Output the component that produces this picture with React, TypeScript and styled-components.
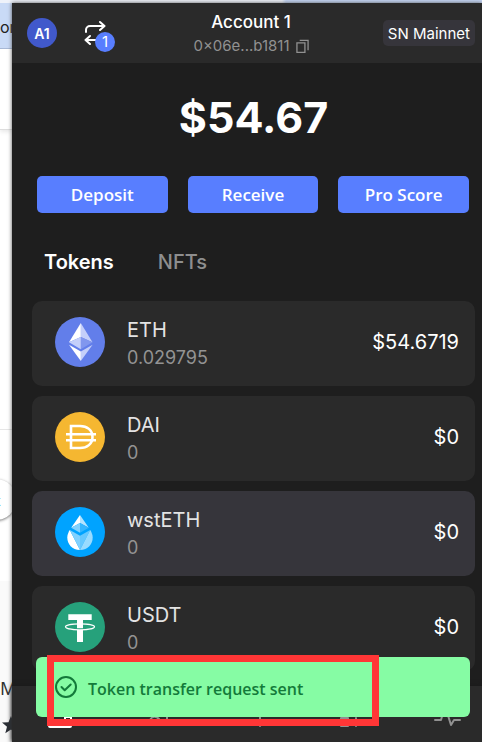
import React from "react";
import styled, { createGlobalStyle } from "styled-components";

const GlobalStyle = createGlobalStyle`
  *, *::before, *::after { box-sizing: border-box; }
  body { margin: 0; background: #fff; font-family: Inter, "Noto Sans", sans-serif; }
  button { font: inherit; border: 0; padding: 0; margin: 0; background: none; color: inherit; }
  p, h1, h2, ul { margin: 0; padding: 0; font-weight: inherit; }
`;

const Screen = styled.div`
  display: grid;
  grid-template-columns: 12px minmax(0, 1fr);
  grid-template-rows: 3px minmax(0, 1fr);
  min-height: 100vh;
`;

const BrowserTop = styled.div`
  grid-column: 1 / -1;
  background: linear-gradient(90deg, #eef2fa 0 282px, #c5d6f5 286px 100%);
`;

const PageBehind = styled.aside`
  display: flex;
  flex-direction: column;
  overflow: hidden;
  background: #fff;
  white-space: nowrap;
`;

const BehindTab = styled.div`
  height: 46px;
  padding-top: 12px;
  background: #c9daf6;
  border-bottom: 1px solid #9fb2d3;
  color: #222;
  font-size: 16px;
  line-height: 24px;
`;

const BehindToolbar = styled.div`
  height: 81px;
  border-bottom: 1px solid #ddd;
  box-shadow: 0 2px 4px #e8e8e8;
`;

const BehindSection = styled.div`
  height: 300px;
  border-bottom: 1px solid #e6e6e6;
`;

const BehindPill = styled.div`
  height: 41px;
  margin-top: 49px;
  width: 40px;
  margin-left: -24px;
  padding-left: 20px;
  border-radius: 0 20px 20px 0;
  box-shadow: 0 1px 3px #777;
  color: #4b9fd5;
  font-size: 14px;
  line-height: 44px;
`;

const BehindFooter = styled.div`
  display: flex;
  flex-direction: column;
  flex: 1;
  margin-top: 61px;
  padding-top: 95px;
  background: #fafafa;
  color: #333;
  font: 18px/24px "Noto Sans", sans-serif;
`;

const StarIcon = styled.svg`
  flex: none;
  margin: 15px 0 0 1px;
`;

const Wallet = styled.main`
  position: relative;
  display: flex;
  flex-direction: column;
  background: #1e1e1e;
  color: #fff;
  box-shadow: 0 0 4px #555;
`;

const Header = styled.header`
  display: grid;
  grid-template-columns: 1fr auto 1fr;
  align-items: center;
  height: 60px;
  padding: 0 7px 0 15px;
  background: #2a2a2a;
`;

const HeaderStart = styled.div`
  display: flex;
  align-items: center;
  gap: 26px;
`;

const Avatar = styled.button`
  width: 30px;
  height: 30px;
  border-radius: 50%;
  background: #4159cb;
  font-size: 14px;
  font-weight: 600;
`;

const Activity = styled.button`
  position: relative;
  width: 24px;
  height: 28px;
`;

const Count = styled.span`
  position: absolute;
  left: 12px;
  top: 13px;
  width: 20px;
  height: 20px;
  border-radius: 50%;
  background: #587eff;
  font-size: 15px;
  line-height: 20px;
`;

const Account = styled.div`
  display: flex;
  flex-direction: column;
  align-items: center;
  padding-top: 2px;
`;

const AccountName = styled.h1`
  font-size: 17px;
  font-weight: 500;
  line-height: 24px;
`;

const Address = styled.button`
  display: flex;
  align-items: center;
  gap: 6px;
  color: #919191;
  font-size: 15px;
  line-height: 24px;
`;

const Network = styled.button`
  justify-self: end;
  height: 26px;
  padding: 0 5px;
  border-radius: 5px;
  background: #36353b;
  font-size: 15px;
  white-space: nowrap;
`;

const Balance = styled.p`
  padding: 26px 7px 0 20px;
  font-size: 43px;
  font-weight: 700;
  line-height: 56px;
  text-align: center;
`;

const Actions = styled.div`
  display: grid;
  grid-template-columns: repeat(3, 1fr);
  gap: 20px;
  padding: 31px 13px 0 25px;
`;

const Action = styled.button`
  height: 37px;
  padding-top: 1px;
  border-radius: 5px;
  background: #587eff;
  font: 600 17px/24px "Open Sans", sans-serif;
`;

const Tabs = styled.div`
  display: flex;
  gap: 44px;
  padding: 35px 32px 0;
`;

const Tab = styled.button<{ $active?: boolean }>`
  color: ${(p) => (p.$active ? "#fff" : "#8e8e8e")};
  font-size: 20px;
  font-weight: ${(p) => (p.$active ? 600 : 500)};
  line-height: 28px;
`;

const TokenList = styled.ul`
  display: flex;
  flex-direction: column;
  gap: 10px;
  flex: 1;
  padding: 25px 7px 15px 20px;
  list-style: none;
`;

const TokenRow = styled.li<{ $hovered?: boolean }>`
  display: flex;
  align-items: center;
  gap: 22px;
  height: 85px;
  padding: 0 16px 3px 23px;
  border-radius: 10px;
  background: ${(p) => (p.$hovered ? "#36353b" : "#2a2a2a")};
`;

const TokenLogo = styled.svg`
  flex: none;
  width: 50px;
  height: 50px;
`;

const TokenText = styled.div`
  flex: 1;
  padding-top: 3px;
`;

const TokenName = styled.h2`
  color: #e3e3e3;
  font-size: 20px;
  line-height: 28px;
`;

const TokenAmount = styled.p`
  color: #939393;
  font-size: 18px;
  line-height: 28px;
`;

const TokenValue = styled.p`
  font-size: 20px;
  line-height: 28px;
`;

const Nav = styled.nav`
  display: flex;
  align-items: center;
  justify-content: space-between;
  height: 56px;
  padding: 0 20px 0 33px;
  background: #2a2a2a;
  box-shadow: 0 0 5px #191919;
`;

const NavButton = styled.button<{ $active?: boolean }>`
  display: flex;
  color: ${(p) => (p.$active ? "#fff" : "#919191")};
`;

const Toast = styled.div`
  position: absolute;
  left: 24px;
  right: 12px;
  bottom: 25px;
  display: flex;
  align-items: center;
  gap: 10px;
  height: 60px;
  padding: 0 18px;
  border-radius: 6px;
  background: #86fca4;
  color: #137a3a;
  font: 600 16px/24px "Open Sans", sans-serif;
`;

const ToastText = styled.span`
  padding-top: 3px;
`;

const Highlight = styled.div`
  position: absolute;
  left: 35px;
  right: 103px;
  bottom: 16px;
  height: 71px;
  border: 7px solid #ff3636;
  pointer-events: none;
`;

const EthLogo = () => (
  <TokenLogo viewBox="0 0 50 50" aria-hidden="true">
    <circle cx="25" cy="25" r="25" fill="#627eea" />
    <path d="M25.8 6v14l11.7 5.3z" fill="#c4cffa" />
    <path d="M25.8 6 14 25.3 25.8 20z" fill="#fff" />
    <path d="M25.8 34.6V44L37.6 27.8z" fill="#c4cffa" />
    <path d="M25.8 44v-9.4L14 27.8z" fill="#fff" />
    <path d="M25.8 32.3 37.5 25.3 25.8 20z" fill="#8197ee" />
    <path d="m14 25.3 11.8 7V20z" fill="#c4cffa" />
  </TokenLogo>
);

const DaiLogo = () => (
  <TokenLogo viewBox="0 0 50 50" aria-hidden="true">
    <circle cx="25" cy="25" r="25" fill="#f5b731" />
    <path d="M16 14h9c7 0 12.500 4 12.500 11S32 36 25 36h-9z" fill="none" stroke="#fff" strokeWidth="2.600" />
    <path d="M11 22.300h30M11 28.300h30" stroke="#fff" strokeWidth="2.400" />
  </TokenLogo>
);

const WstEthLogo = () => (
  <TokenLogo viewBox="0 0 50 50" aria-hidden="true">
    <circle cx="25" cy="25" r="25" fill="#00a3ff" />
    <path d="M25 8l-8.800 12.800L25 16z" fill="#fff" />
    <path d="M25 8l8.800 12.800L25 16z" fill="#b3e3ff" />
    <path d="M25 16l-8.800 4.800L25 25.800z" fill="#80d1ff" />
    <path d="M25 16l8.800 4.800-8.800 5z" fill="#33b5ff" />
    <path d="M14.800 23L25 43C17 43 12.300 37 12.300 30.500 12.300 27.500 13.600 25 14.800 23z" fill="#fff" />
    <path d="M14.800 23L25 28.800V43z" fill="#80d1ff" />
    <path d="M35.200 23L25 28.800V43z" fill="#66c8ff" />
    <path d="M35.200 23L25 43C33 43 37.700 37 37.700 30.500 37.700 27.500 36.400 25 35.200 23z" fill="#99dbff" />
  </TokenLogo>
);

const UsdtLogo = () => (
  <TokenLogo viewBox="0 0 50 50" aria-hidden="true">
    <circle cx="25" cy="25" r="25" fill="#26a17b" />
    <path d="M13.300 12.300h23.400V18h-8.700v8.200h-6V18h-8.700zM22 28h6v12h-6z" fill="#fff" />
    <ellipse cx="25" cy="24.800" rx="14.500" ry="3" fill="none" stroke="#fff" strokeWidth="1.200" />
  </TokenLogo>
);

const tokens = [
  { name: "ETH", amount: "0.029795", value: "$54.6719", Logo: EthLogo },
  { name: "DAI", amount: "0", value: "$0", Logo: DaiLogo },
  { name: "wstETH", amount: "0", value: "$0", Logo: WstEthLogo, hovered: true },
  { name: "USDT", amount: "0", value: "$0", Logo: UsdtLogo },
];

const icon = { fill: "none", stroke: "currentColor", strokeWidth: 2, strokeLinecap: "round", strokeLinejoin: "round" } as const;

export default function App() {
  return (
    <>
      <GlobalStyle />
      <Screen>
        <BrowserTop />
        <PageBehind>
          <BehindTab>or</BehindTab>
          <BehindToolbar />
          <BehindSection />
          <BehindPill>t</BehindPill>
          <BehindFooter>
            M
            <StarIcon width="20" height="20" viewBox="0 0 20 20" aria-hidden="true">
              <path d="m10 1 2.500 6.200 6.500.4-5 4.200 1.700 6.500L10 14.600l-5.700 3.700L6 11.800 1 7.600l6.500-.4z" fill="#2c3037" />
            </StarIcon>
          </BehindFooter>
        </PageBehind>
        <Wallet>
          <Header>
            <HeaderStart>
              <Avatar>A1</Avatar>
              <Activity aria-label="Pending activity">
                <svg width="24" height="26" viewBox="0 0 24 26" {...icon} aria-hidden="true">
                  <path d="M3 13v-2a4 4 0 0 1 4-4h14M17 3l4.500 4L17 11M2.500 21H15M7 17l-4.500 4L7 25" />
                </svg>
                <Count>1</Count>
              </Activity>
            </HeaderStart>
            <Account>
              <AccountName>Account 1</AccountName>
              <Address aria-label="Copy address">
                0×06e...b1811
                <svg width="13" height="15" viewBox="0 0 14 16" fill="none" stroke="currentColor" strokeWidth="1.400" aria-hidden="true">
                  <path d="M1 4h8.600v10.300H1zM4 1.400h9V12" />
                </svg>
              </Address>
            </Account>
            <Network>SN Mainnet</Network>
          </Header>
          <Balance>$54.67</Balance>
          <Actions>
            <Action>Deposit</Action>
            <Action>Receive</Action>
            <Action>Pro Score</Action>
          </Actions>
          <Tabs role="tablist">
            <Tab role="tab" aria-selected="true" $active>Tokens</Tab>
            <Tab role="tab" aria-selected="false">NFTs</Tab>
          </Tabs>
          <TokenList>
            {tokens.map(({ name, amount, value, Logo, hovered }) => (
              <TokenRow key={name} $hovered={hovered}>
                <Logo />
                <TokenText>
                  <TokenName>{name}</TokenName>
                  <TokenAmount>{amount}</TokenAmount>
                </TokenText>
                <TokenValue>{value}</TokenValue>
              </TokenRow>
            ))}
          </TokenList>
          <Nav aria-label="Wallet sections">
            <NavButton $active aria-label="Wallet">
              <svg width="28" height="30" viewBox="0 0 28 30" {...icon} aria-hidden="true">
                <path d="M4 8v19a1 1 0 0 0 1 1h20a1 1 0 0 0 1-1V8zM26 18h-6v5h6" />
              </svg>
            </NavButton>
            <NavButton aria-label="Swap">
              <svg width="28" height="28" viewBox="0 0 28 28" {...icon} aria-hidden="true">
                <path d="M8 20c2-4 6-4 9-1l-5 4M25 17v2" />
              </svg>
            </NavButton>
            <NavButton aria-label="Explore">
              <svg width="28" height="28" viewBox="0 0 28 28" {...icon} aria-hidden="true">
                <path d="M20 8v18" />
              </svg>
            </NavButton>
            <NavButton aria-label="Apps">
              <svg width="28" height="28" viewBox="0 0 28 28" {...icon} aria-hidden="true">
                <path d="M4 18h7v8H4zM19 18v8" />
              </svg>
            </NavButton>
            <NavButton aria-label="Activity">
              <svg width="28" height="28" viewBox="0 0 28 28" {...icon} aria-hidden="true">
                <path d="M1 20h6l4-14 6 19 3-5h6" />
              </svg>
            </NavButton>
          </Nav>
          <Toast role="status">
            <svg width="24" height="24" viewBox="0 0 24 24" {...icon} aria-hidden="true">
              <circle cx="12" cy="12" r="10" />
              <path d="m7.500 12 3.200 3.200 6-5.700" />
            </svg>
            <ToastText>Token transfer request sent</ToastText>
          </Toast>
          <Highlight />
        </Wallet>
      </Screen>
    </>
  );
}
